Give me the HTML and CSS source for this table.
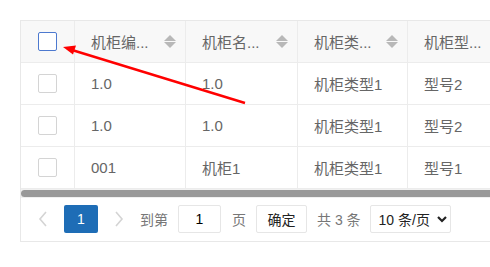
FILE: index.html
```html
<!DOCTYPE html>
<html lang="zh">
<head>
    <meta charset="UTF-8">
    <title>机柜列表</title>
    <link rel="stylesheet" href="styles.css">
</head>
<body>
    <div class="grid-wrap">
        <div class="grid">
            <div class="row head">
                <div class="cell check"><span class="box active"></span></div>
                <div class="cell"><span class="label">机柜编...</span><span class="sort"></span></div>
                <div class="cell"><span class="label">机柜名...</span><span class="sort"></span></div>
                <div class="cell"><span class="label">机柜类...</span><span class="sort"></span></div>
                <div class="cell"><span class="label">机柜型...</span><span class="sort"></span></div>
            </div>
            <div class="row">
                <div class="cell check"><span class="box"></span></div>
                <div class="cell">1.0</div>
                <div class="cell">1.0</div>
                <div class="cell">机柜类型1</div>
                <div class="cell">型号2</div>
            </div>
            <div class="row">
                <div class="cell check"><span class="box"></span></div>
                <div class="cell">1.0</div>
                <div class="cell">1.0</div>
                <div class="cell">机柜类型1</div>
                <div class="cell">型号2</div>
            </div>
            <div class="row">
                <div class="cell check"><span class="box"></span></div>
                <div class="cell">001</div>
                <div class="cell">机柜1</div>
                <div class="cell">机柜类型1</div>
                <div class="cell">型号1</div>
            </div>
        </div>
        <div class="scrollbar"><div class="thumb"></div></div>
        <div class="pager">
            <span class="nav prev">
                <svg width="10" height="16" viewBox="0 0 10 16"><polyline points="8,1 2,8 8,15" fill="none" stroke="#d4d4d4" stroke-width="1.6"/></svg>
            </span>
            <span class="page current">1</span>
            <span class="nav next">
                <svg width="10" height="16" viewBox="0 0 10 16"><polyline points="2,1 8,8 2,15" fill="none" stroke="#d4d4d4" stroke-width="1.6"/></svg>
            </span>
            <span class="txt goto">到第</span>
            <input class="jump" type="text" value="1">
            <span class="txt">页</span>
            <button class="ok">确定</button>
            <span class="txt">共 3 条</span>
            <span class="size">10 条/页
                <svg width="10" height="7" viewBox="0 0 10 7"><polyline points="1,1 5,5 9,1" fill="none" stroke="#222" stroke-width="2.2"/></svg>
            </span>
        </div>
    </div>

    <!-- pointer to the select-all box -->
    <svg class="pointer" width="490" height="267" viewBox="0 0 490 267">
        <line x1="245" y1="103" x2="72" y2="50" stroke="#f00" stroke-width="2.4"/>
        <polygon points="63,47 76,45.5 73,54.5" fill="#f00"/>
    </svg>
</body>
</html>
```

FILE: styles.css
```css
body {
    margin: 0;
    padding: 20px 0 0 20px;
    overflow: hidden;
    background: #fff;
    font-family: "Liberation Sans", "Noto Sans CJK SC", sans-serif;
    font-size: 14px;
    color: #666;
}
.grid-wrap {
    width: 600px;
    border: 1px solid #e8e8e8;
}
.row {
    display: grid;
    grid-template-columns: 54px 111px 112px 110px 112px;
    height: 42px;
    font-size: 15px;
}
.row.head {
    background: #f8f8f8;
}
.cell {
    display: flex;
    align-items: center;
    padding: 0 9px 0 16px;
    border-right: 1px solid #ececec;
    border-bottom: 1px solid #ececec;
    white-space: nowrap;
    overflow: hidden;
}
.row .cell.check {
    justify-content: center;
    padding: 0;
}
.box {
    width: 17px;
    height: 17px;
    border: 1px solid #d4d4d4;
    border-radius: 2px;
    background: #fff;
}
.box.active {
    border-color: #4d79cf;
}
.sort {
    margin-left: auto;
    flex: none;
    width: 12px;
    height: 13px;
    position: relative;
}
.sort::before,
.sort::after {
    content: "";
    position: absolute;
    left: 0;
    border-left: 6px solid transparent;
    border-right: 6px solid transparent;
}
.sort::before {
    top: 0;
    border-bottom: 6px solid #b8b8b8;
}
.sort::after {
    bottom: 0;
    border-top: 6px solid #b8b8b8;
}
.scrollbar {
    height: 9px;
    padding-top: 1px;
    box-sizing: border-box;
    background: #f0f0f0;
}
.thumb {
    height: 7px;
    border-radius: 4px;
    background: #999;
}
.pager {
    display: flex;
    align-items: center;
    height: 43px;
    padding: 0 0 1px 9px;
    box-sizing: border-box;
    white-space: nowrap;
}
.nav {
    width: 26px;
    display: flex;
    justify-content: center;
}
.page {
    width: 34px;
    height: 28px;
    margin: 0 8px;
    line-height: 28px;
    text-align: center;
    border-radius: 2px;
}
.page.current {
    background: #1e6db6;
    color: #fff;
}
.txt {
    color: #777;
}
.goto {
    margin-left: 8px;
}
.jump {
    width: 43px;
    height: 28px;
    margin: 0 11px 0 10px;
    box-sizing: border-box;
    border: 1px solid #e6e6e6;
    border-radius: 2px;
    font: inherit;
    color: #000;
    text-align: center;
    padding: 0;
}
.ok {
    height: 28px;
    width: 51px;
    margin: 0 10px;
    border: 1px solid #e6e6e6;
    border-radius: 2px;
    background: #fff;
    font: inherit;
    color: #222;
    padding: 0;
}
.size {
    display: flex;
    align-items: center;
    gap: 7px;
    box-sizing: border-box;
    width: 81px;
    height: 28px;
    margin-left: 9px;
    padding-left: 8px;
    border: 1px solid #e6e6e6;
    border-radius: 2px;
    color: #222;
    flex: none;
}
.pointer {
    position: absolute;
    top: 0;
    left: 0;
    pointer-events: none;
}
```
